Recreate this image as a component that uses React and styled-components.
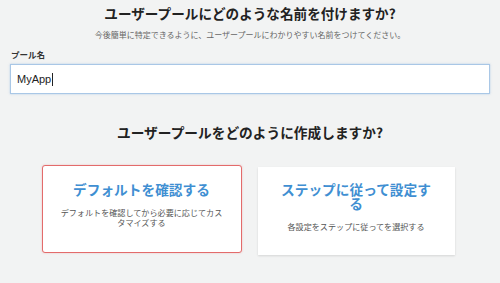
import React from 'react';
import styled, { createGlobalStyle } from 'styled-components';

const GlobalStyle = createGlobalStyle`
  html, body {
    margin: 0;
    padding: 0;
    background: #f2f3f3;
  }
  body {
    font-family: "Noto Sans CJK JP", "Noto Sans", sans-serif;
    color: #333;
  }
`;

function App() {
  return (
    <Page>
      <GlobalStyle />
      <Title>ユーザープールにどのような名前を付けますか?</Title>
      <Lead>今後簡単に特定できるように、ユーザープールにわかりやすい名前をつけてください。</Lead>
      <Field>
        <Label>プール名</Label>
        <Input>
          MyApp<Caret />
        </Input>
      </Field>
      <SubTitle>ユーザープールをどのように作成しますか?</SubTitle>
      <Cards>
        <Card selected>
          <CardTitle>デフォルトを確認する</CardTitle>
          <CardText>デフォルトを確認してから必要に応じてカスタマイズする</CardText>
        </Card>
        <Card>
          <CardTitle>ステップに従って設定する</CardTitle>
          <CardText>各設定をステップに従ってを選択する</CardText>
        </Card>
      </Cards>
    </Page>
  );
}

export default App;

const Page = styled.main`
  width: 500px;
  height: 283px;
  overflow: hidden;
  padding: 3px 10px 0;
  box-sizing: border-box;
  display: flex;
  flex-direction: column;
`;

const Title = styled.h1`
  margin: 0;
  font-size: 13.6px;
  font-weight: bold;
  color: #222;
  text-align: center;
  line-height: 21px;
`;

const Lead = styled.p`
  margin: 5px 0 0;
  font-size: 8px;
  color: #666;
  text-align: center;
  line-height: 12px;
`;

const Field = styled.div`
  margin-top: 7px;
  display: flex;
  flex-direction: column;
  gap: 4px;
`;

const Label = styled.label`
  font-size: 8.5px;
  font-weight: bold;
  color: #333;
  line-height: 12px;
  padding-left: 1px;
`;

const Input = styled.div`
  height: 30px;
  box-sizing: border-box;
  background: #fff;
  border: 1px solid #a9c7e6;
  box-shadow: 0 0 2px rgba(120, 170, 220, 0.5);
  display: flex;
  align-items: center;
  padding-left: 6px;
  font-family: "Liberation Sans", "Noto Sans", sans-serif;
  font-size: 11px;
  color: #222;
`;

const Caret = styled.span`
  display: inline-block;
  width: 1px;
  height: 13px;
  background: #222;
  margin-left: 1px;
`;

const SubTitle = styled.h2`
  margin: 28px 0 0;
  font-size: 13.7px;
  font-weight: bold;
  color: #222;
  text-align: center;
  line-height: 20px;
`;

const Cards = styled.div`
  margin-top: 23px;
  display: flex;
  align-items: flex-start;
  justify-content: center;
  gap: 16px;
  padding-right: 4px;
`;

const Card = styled.div`
  width: ${p => (p.selected ? '200px' : '197px')};
  height: 88px;
  margin-top: ${p => (p.selected ? '0' : '2px')};
  box-sizing: border-box;
  background: #fff;
  border: 1px solid ${p => (p.selected ? '#e36b6b' : '#fff')};
  border-radius: ${p => (p.selected ? '3px' : '0')};
  box-shadow: ${p => (p.selected ? '0 0 2px rgba(220, 80, 80, 0.35)' : '0 1px 2px rgba(0, 0, 0, 0.12)')};
  padding: ${p => (p.selected ? '16px 18px 0' : '14px 17px 0')};
  text-align: center;
`;

const CardTitle = styled.div`
  font-size: 13.7px;
  font-weight: bold;
  color: #3f8fd2;
  line-height: 14px;
  margin-bottom: 12px;
`;

const CardText = styled.div`
  font-size: 8.1px;
  color: #555;
  line-height: 10px;
`;
